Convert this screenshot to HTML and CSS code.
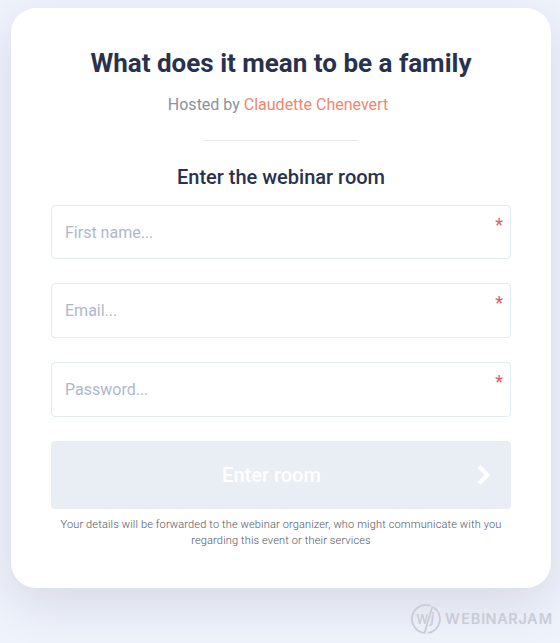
FILE: index.html
```html
<!DOCTYPE html>
<html lang="en">
<head>
<meta charset="utf-8">
<title>Enter the webinar room</title>
<link rel="stylesheet" href="styles.css">
</head>
<body>
<main class="card">
  <h1 class="title">What does it mean to be a family</h1>
  <p class="host">Hosted by <span class="host-name">Claudette Chenevert</span></p>
  <hr class="divider">
  <h2 class="subtitle">Enter the webinar room</h2>
  <form class="form">
    <div class="field field-first"><input class="input" type="text" placeholder="First name..."><span class="required">*</span></div>
    <div class="field"><input class="input" type="text" placeholder="Email..."><span class="required">*</span></div>
    <div class="field"><input class="input" type="text" placeholder="Password..."><span class="required">*</span></div>
    <button class="submit" type="button">
      <span class="submit-label">Enter room</span>
      <svg class="chevron" width="14" height="22" viewBox="0 0 14 22"><path d="M2 2.5 L10.5 11 L2 19.5" fill="none" stroke="#fff" stroke-width="4"/></svg>
    </button>
  </form>
  <p class="note">Your details will be forwarded to the webinar organizer, who might communicate with you regarding this event or their services</p>
</main>
<footer class="footer">
  <svg class="logo" width="142" height="32" viewBox="0 0 142 32">
    <g fill="none" stroke="#c9ccd6" stroke-width="1.8">
      <path d="M20.4 2.7 A14 14 0 1 0 14.6 29.9 L22.4 3.3"/>
      <path d="M23.6 4.3 A14 14 0 0 1 18 29.9"/>
    </g>
    <text class="mark" x="6.5" y="20.8" textLength="11.5" lengthAdjust="spacingAndGlyphs">W</text>
    <text class="mark mark-j" x="20.6" y="19.5">j</text>
    <text class="wordmark" y="21.2" x="35 51.2 60.7 71.2 75.6 87.2 98.2 108.4 116.9 128.7">WEBINARJAM</text>
  </svg>
</footer>
</body>
</html>
```

FILE: styles.css
```css
* { box-sizing: border-box; }
body {
  margin: 0;
  height: 643px;
  padding: 8px 9px 0 11px;
  overflow: hidden;
  background: #eff3fc;
  font-family: Roboto, sans-serif;
}
.card {
  height: 580px;
  padding: 36px 40px 0;
  border-radius: 25px;
  background: #fff;
  box-shadow: 0 15px 50px rgba(30, 25, 60, 0.12);
  text-align: center;
}
.title {
  margin: 0;
  font-size: 26px;
  line-height: 38px;
  font-weight: 700;
  color: #28324e;
  white-space: nowrap;
}
.host {
  margin: 13px 6px 0 0;
  font-size: 16px;
  line-height: 20px;
  color: #8b919a;
}
.host-name { color: #f08672; }
.divider {
  width: 154px;
  height: 1px;
  margin: 25px auto 0;
  border: 0;
  background: #e7e8ea;
}
.subtitle {
  margin: 24px 0 0;
  font-size: 20px;
  line-height: 24px;
  font-weight: 500;
  color: #28324e;
}
.form { margin-top: 16px; }
.field {
  position: relative;
  height: 55px;
  margin-bottom: 24px;
}
.field-first { height: 54px; }
.input {
  display: block;
  width: 100%;
  height: 100%;
  padding: 0 13px;
  border: 1px solid #e2eaf3;
  border-radius: 4px;
  background: #fff;
  font: 16px Roboto, sans-serif;
}
.input::placeholder { color: #afb7cc; opacity: 1; }
.required {
  position: absolute;
  top: 9px;
  right: 8px;
  font-size: 18px;
  line-height: 22px;
  color: #db6066;
}
.submit {
  display: grid;
  grid-template-columns: 30px 1fr 30px;
  align-items: center;
  width: 100%;
  height: 68px;
  padding: 0 10px;
  border: 0;
  border-radius: 4px;
  background: #e9eef5;
  color: #fff;
  font: 500 20px Roboto, sans-serif;
}
.submit-label { grid-column: 2; margin-left: -19px; }
.chevron { margin-left: 6px; }
.note {
  margin: 8px 0 0;
  font-size: 11px;
  line-height: 16px;
  font-weight: 300;
  letter-spacing: 0.15px;
  color: #50545c;
}
.footer {
  display: flex;
  justify-content: flex-end;
  margin-top: 15px;
  margin-right: -1px;
}
.logo { display: block; }
.mark, .wordmark { fill: #c9ccd6; }
.mark { font: 700 14px Lato, sans-serif; }
.mark-j { font-style: italic; font-size: 15px; }
.wordmark { font: 600 14.5px Inter, sans-serif; }
```
